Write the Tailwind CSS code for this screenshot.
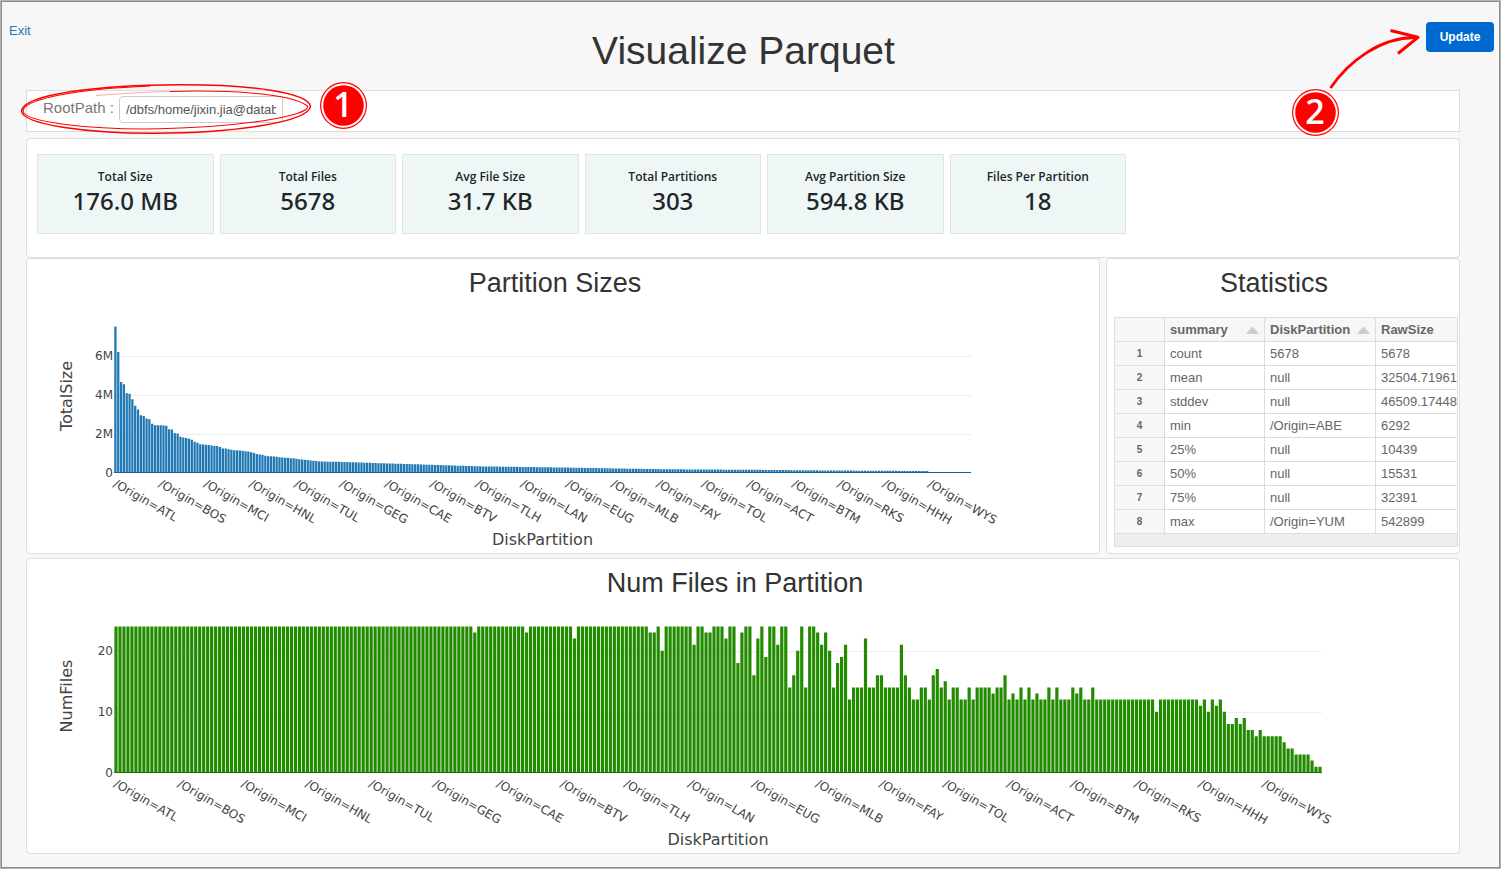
<!DOCTYPE html>
<html lang="en">

<head>
    <meta charset="UTF-8">
    <meta name="viewport" content="width=device-width, initial-scale=1.0">
    <title>Visualize Parquet</title>
    <script src="https://cdn.jsdelivr.net/npm/@tailwindcss/browser@4"></script>
</head>

<body class="min-h-screen border border-[#b4b4b4] bg-[#f7f7f7] font-['Liberation_Sans',Arial,sans-serif] text-[#333] inset-ring inset-ring-[#8c8c8c]">
    <header class="flex items-start pt-[21px] pb-[10px] pl-2 pr-[6px]">
        <nav class="w-[52px] text-[13px] leading-[18px]">
            <a href="#" class="text-[#1c75bf] hover:underline">Exit</a>
        </nav>
        <h1 class="flex-1 text-center text-[39px] leading-[58px]">Visualize Parquet</h1>
        <div class="relative">
            <button type="button" class="block h-[30px] w-[68px] rounded bg-[#0069d1] text-[12px] font-bold text-white hover:bg-blue-700">Update</button>
            <!-- step 2 callout -->
            <svg class="pointer-events-none absolute top-0 right-[68px] z-10" width="140" height="116" viewBox="0 0 140 116" fill="none" aria-hidden="true">
                <path d="M44.500 66 C62 40 94 15 130 15.500" stroke="#f00" stroke-width="2.800" />
                <path d="M104.500 8.500 L132 15.300 L112 31.500" stroke="#f00" stroke-width="3" stroke-linejoin="round" />
                <circle cx="29.500" cy="90.500" r="23.500" fill="#f00" />
                <circle cx="29.500" cy="90.500" r="22.300" fill="#fff" />
                <circle cx="29.500" cy="90.500" r="20.300" fill="#f00" />
                <text x="29" y="102" text-anchor="middle" class="fill-white font-['Open_Sans',sans-serif] text-[34px] font-semibold">2</text>
            </svg>
        </div>
    </header>

    <main class="pr-10 pb-3 pl-[25px]">
        <form class="relative mb-[6px] flex h-[42px] items-start border border-[#ddd] bg-white pt-[5px] pl-4">
            <label for="rootpath" class="mr-[5px] text-[15px] leading-6 text-[#777]">RootPath :</label>
            <input id="rootpath" type="text" value="/dbfs/home/jixin.jia@datab" class="h-[27px] w-[164px] rounded border border-[#ccc] bg-white px-[6px] text-[13px] text-[#555]">
            <!-- step 1 callout -->
            <svg class="pointer-events-none absolute -top-[11px] -left-[7px] z-10" width="352" height="56" viewBox="0 0 352 56" fill="none" aria-hidden="true">
                <path d="M1.500 31 C4 14 80 5 160 4.800 C235 4.600 287 13 290.500 26 C289 42 215 53 135 53.200 C70 53.500 3 45 1.500 31" stroke="#f00" stroke-width="1.500" />
                <path d="M130 6 C60 9 5 18 3 31 C4 42 70 50 140 48.800 C220 47 291 36 287.500 26 C270 12 200 10 150 11.500" stroke="#f00" stroke-width="1.100" />
                <path d="M150 11.500 C120 12 100 14 76 15.500" stroke="#f00" stroke-opacity=".35" />
                <circle cx="323.500" cy="25.500" r="23.500" fill="#f00" />
                <circle cx="323.500" cy="25.500" r="22.300" fill="#fff" />
                <circle cx="323.500" cy="25.500" r="20.300" fill="#f00" />
                <text x="323" y="37" text-anchor="middle" class="fill-white font-['Open_Sans',sans-serif] text-[34px] font-semibold">1</text>
            </svg>
        </form>

        <section class="rounded-sm border border-[#ddd] bg-white px-[10px] pt-[15px] pb-[23px]">
            <dl class="grid max-w-[1089px] grid-cols-6 gap-[6px] text-center font-['Noto_Sans','Open_Sans',sans-serif] text-[#212529]">
                <div class="h-20 border border-[#dfe6e8] bg-[#eef7f6] pt-[13px]">
                    <dt class="font-['Open_Sans',sans-serif] text-[12px] leading-[18px] font-semibold">Total Size</dt>
                    <dd class="text-[24px] leading-[30px] font-medium">176.0 MB</dd>
                </div>
                <div class="h-20 border border-[#dfe6e8] bg-[#eef7f6] pt-[13px]">
                    <dt class="font-['Open_Sans',sans-serif] text-[12px] leading-[18px] font-semibold">Total Files</dt>
                    <dd class="text-[24px] leading-[30px] font-medium">5678</dd>
                </div>
                <div class="h-20 border border-[#dfe6e8] bg-[#eef7f6] pt-[13px]">
                    <dt class="font-['Open_Sans',sans-serif] text-[12px] leading-[18px] font-semibold">Avg File Size</dt>
                    <dd class="text-[24px] leading-[30px] font-medium">31.7 KB</dd>
                </div>
                <div class="h-20 border border-[#dfe6e8] bg-[#eef7f6] pt-[13px]">
                    <dt class="font-['Open_Sans',sans-serif] text-[12px] leading-[18px] font-semibold">Total Partitions</dt>
                    <dd class="text-[24px] leading-[30px] font-medium">303</dd>
                </div>
                <div class="h-20 border border-[#dfe6e8] bg-[#eef7f6] pt-[13px]">
                    <dt class="font-['Open_Sans',sans-serif] text-[12px] leading-[18px] font-semibold">Avg Partition Size</dt>
                    <dd class="text-[24px] leading-[30px] font-medium">594.8 KB</dd>
                </div>
                <div class="h-20 border border-[#dfe6e8] bg-[#eef7f6] pt-[13px]">
                    <dt class="font-['Open_Sans',sans-serif] text-[12px] leading-[18px] font-semibold">Files Per Partition</dt>
                    <dd class="text-[24px] leading-[30px] font-medium">18</dd>
                </div>
            </dl>
        </section>

        <div class="mb-1 flex gap-[6px]">
            <section class="min-w-0 flex-1 rounded-sm border border-[#ddd] bg-white pt-2">
                <h2 class="pt-px pr-4 text-center text-[27px] leading-[31px]">Partition Sizes</h2>
                <svg id="sizes" class="block w-full font-['DejaVu_Sans',Verdana,sans-serif]" viewBox="0 0 1072 254" fill="#444"></svg>
            </section>

            <section class="w-[354px] rounded-sm border border-[#ddd] bg-white pt-2 pr-px pb-[6px] pl-[7px]">
                <h2 class="pt-px pr-6 text-center text-[27px] leading-[31px]">Statistics</h2>
                <div class="mt-[18px] overflow-hidden">
                    <table class="w-full table-fixed border-collapse text-left text-[13px] text-[#666]">
                        <colgroup>
                            <col class="w-[50px]">
                            <col class="w-[100px]">
                            <col class="w-[111px]">
                            <col>
                        </colgroup>
                        <thead>
                            <tr class="h-6 bg-[#f7f7f7]">
                                <th class="border border-[#ddd]"></th>
                                <th class="border border-[#ddd] px-[5px]">
                                    <div class="flex items-center justify-between">summary <svg width="13" height="8" viewBox="0 0 13 8" fill="#ccc"><path d="M6.500 0.500 L12.500 7 L12 8 H1 L0.500 7 Z" /></svg></div>
                                </th>
                                <th class="border border-[#ddd] px-[5px]">
                                    <div class="flex items-center justify-between">DiskPartition <svg width="13" height="8" viewBox="0 0 13 8" fill="#ccc"><path d="M6.500 0.500 L12.500 7 L12 8 H1 L0.500 7 Z" /></svg></div>
                                </th>
                                <th class="border border-[#ddd] px-[5px]">RawSize</th>
                            </tr>
                        </thead>
                        <tbody>
                            <tr class="h-6">
                                <th class="border border-[#ddd] bg-[#f7f7f7] text-center text-[10px]">1</th>
                                <td class="border border-[#ddd] px-[5px]">count</td>
                                <td class="border border-[#ddd] px-[5px]">5678</td>
                                <td class="border border-[#ddd] pl-[5px]">5678</td>
                            </tr>
                            <tr class="h-6">
                                <th class="border border-[#ddd] bg-[#f7f7f7] text-center text-[10px]">2</th>
                                <td class="border border-[#ddd] px-[5px]">mean</td>
                                <td class="border border-[#ddd] px-[5px]">null</td>
                                <td class="border border-[#ddd] pl-[5px]">32504.71961</td>
                            </tr>
                            <tr class="h-6">
                                <th class="border border-[#ddd] bg-[#f7f7f7] text-center text-[10px]">3</th>
                                <td class="border border-[#ddd] px-[5px]">stddev</td>
                                <td class="border border-[#ddd] px-[5px]">null</td>
                                <td class="border border-[#ddd] pl-[5px]">46509.17448</td>
                            </tr>
                            <tr class="h-6">
                                <th class="border border-[#ddd] bg-[#f7f7f7] text-center text-[10px]">4</th>
                                <td class="border border-[#ddd] px-[5px]">min</td>
                                <td class="border border-[#ddd] px-[5px]">/Origin=ABE</td>
                                <td class="border border-[#ddd] pl-[5px]">6292</td>
                            </tr>
                            <tr class="h-6">
                                <th class="border border-[#ddd] bg-[#f7f7f7] text-center text-[10px]">5</th>
                                <td class="border border-[#ddd] px-[5px]">25%</td>
                                <td class="border border-[#ddd] px-[5px]">null</td>
                                <td class="border border-[#ddd] pl-[5px]">10439</td>
                            </tr>
                            <tr class="h-6">
                                <th class="border border-[#ddd] bg-[#f7f7f7] text-center text-[10px]">6</th>
                                <td class="border border-[#ddd] px-[5px]">50%</td>
                                <td class="border border-[#ddd] px-[5px]">null</td>
                                <td class="border border-[#ddd] pl-[5px]">15531</td>
                            </tr>
                            <tr class="h-6">
                                <th class="border border-[#ddd] bg-[#f7f7f7] text-center text-[10px]">7</th>
                                <td class="border border-[#ddd] px-[5px]">75%</td>
                                <td class="border border-[#ddd] px-[5px]">null</td>
                                <td class="border border-[#ddd] pl-[5px]">32391</td>
                            </tr>
                            <tr class="h-6">
                                <th class="border border-[#ddd] bg-[#f7f7f7] text-center text-[10px]">8</th>
                                <td class="border border-[#ddd] px-[5px]">max</td>
                                <td class="border border-[#ddd] px-[5px]">/Origin=YUM</td>
                                <td class="border border-[#ddd] pl-[5px]">542899</td>
                            </tr>
                        </tbody>
                    </table>
                    <div class="h-[13px] border border-t-0 border-[#ddd] bg-[#eee]"></div>
                </div>
            </section>
        </div>

        <section class="rounded-sm border border-[#ddd] bg-white pt-2">
            <h2 class="pt-px pr-4 text-center text-[27px] leading-[31px]">Num Files in Partition</h2>
            <svg id="files" class="block w-full font-['DejaVu_Sans',Verdana,sans-serif]" viewBox="0 0 1432 254" fill="#444"></svg>
        </section>
    </main>

    <script>
        const origins = ['ATL', 'BOS', 'MCI', 'HNL', 'TUL', 'GEG', 'CAE', 'BTV', 'TLH', 'LAN', 'EUG', 'MLB', 'FAY', 'TOL', 'ACT', 'BTM', 'RKS', 'HHH', 'WYS'];

        // largest partitions, in MB
        const sizes = [
            7.50, 6.20, 4.65, 4.54, 4.08, 4.06, 3.77, 3.44, 3.25, 2.95, 2.91, 2.78, 2.74, 2.52, 2.44, 2.44, 2.44, 2.43, 2.41, 2.23,
            2.22, 2.03, 2.02, 1.85, 1.81, 1.78, 1.74, 1.69, 1.59, 1.54, 1.46, 1.45, 1.44, 1.42, 1.40, 1.38, 1.37, 1.32, 1.25, 1.25,
            1.21, 1.18, 1.16, 1.16, 1.15, 1.13, 1.11, 1.09, 1.06, 1.01, 0.97, 0.94, 0.92, 0.87, 0.85, 0.85, 0.84, 0.82, 0.80, 0.79,
            0.77, 0.77, 0.75, 0.74, 0.72, 0.70, 0.68, 0.67, 0.65, 0.63, 0.62, 0.60, 0.58
        ];
        // long tail: [index, MB]
        const tail = [[72, 0.58], [80, 0.56], [94, 0.49], [112, 0.41], [129, 0.33], [159, 0.27], [182, 0.21], [197, 0.18], [228, 0.15], [252, 0.12], [287, 0.09], [288, 0.03], [302, 0.01]];
        for (let k = 1; k < tail.length; k++) {
            const [i0, v0] = tail[k - 1];
            const [i1, v1] = tail[k];
            for (let i = i0 + 1; i <= i1; i++) sizes[i] = v0 + (v1 - v0) * (i - i0) / (i1 - i0);
        }

        // [files, number of consecutive partitions]
        const runs = [
            [24, 90], [23, 1], [24, 12], [23, 1], [24, 11], [22, 1], [24, 18], [23, 2], [24, 1], [20, 1], [24, 7], [21, 1], [24, 2], [23, 2],
            [24, 3], [22, 1], [24, 2], [18, 1], [23, 1], [24, 2], [16, 1], [22, 1], [24, 1], [19, 1], [24, 2], [21, 1], [24, 2], [14, 1],
            [16, 1], [20, 1], [24, 1], [14, 1], [24, 2], [23, 1], [21, 1], [23, 1], [20, 1], [14, 1], [18, 1], [19, 1], [21, 1], [12, 1],
            [14, 3], [22, 1], [14, 2], [16, 2], [14, 4], [21, 1], [16, 1], [14, 1], [12, 2], [14, 2], [12, 1], [16, 1], [17, 1], [14, 1],
            [15, 1], [12, 1], [14, 2], [12, 2], [14, 1], [12, 1], [14, 4], [13, 1], [14, 2], [16, 1], [12, 1], [13, 1], [12, 1], [14, 1],
            [12, 1], [14, 1], [12, 1], [13, 1], [12, 2], [14, 1], [12, 1], [14, 1], [12, 3], [14, 1], [13, 1], [14, 1], [12, 2], [14, 1],
            [12, 15], [10, 1], [12, 10], [11, 1], [12, 1], [10, 1], [12, 1], [11, 1], [12, 1], [10, 1], [8, 2], [9, 1], [8, 1], [9, 1],
            [7, 2], [6, 1], [7, 1], [6, 5], [5, 1], [4, 2], [3, 4], [2, 1], [1, 2]
        ];
        const files = runs.flatMap(([v, n]) => Array(n).fill(v));

        function draw(id, data, o) {
            const left = 87, base = 174;
            const step = o.width / data.length;
            const right = left + o.width;
            let out = '';
            for (const [v, label] of o.ticks) {
                const y = Math.round(base - v * o.scale) - 0.5;
                if (v) out += `<path d="M${left} ${y + 1}H${right}" stroke="#eee"/>`;
                out += `<text x="86" y="${y + 4.5}" font-size="12" text-anchor="end">${label}</text>`;
            }
            let d = '';
            data.forEach((v, i) => {
                const x = left + (i + 0.1) * step;
                d += `M${x.toFixed(2)} ${base}v${(-v * o.scale - 0.2).toFixed(2)}h${(step * 0.8).toFixed(2)}V${base}z`;
            });
            out += `<path d="${d}" fill="${o.color}"/><path d="M${left} ${base - 0.5}H${right}" stroke="${o.line}"/>`;
            origins.forEach((name, i) => {
                const x = left + (i * 16 + 0.5) * step - 3;
                out += `<text transform="translate(${x.toFixed(1)} 187) rotate(30)" font-size="12">/Origin=${name}</text>`;
            });
            out += `<text x="${left + o.width / 2}" y="246" font-size="16" text-anchor="middle">DiskPartition</text>`;
            out += `<text transform="translate(45 97) rotate(-90)" font-size="16" text-anchor="middle">${o.title}</text>`;
            document.getElementById(id).innerHTML = out;
        }

        draw('sizes', sizes, { width: 857, scale: 19.5, color: '#1f77b4', line: '#1b5f92', title: 'TotalSize', ticks: [[0, '0'], [2, '2M'], [4, '4M'], [6, '6M']] });
        draw('files', files, { width: 1208, scale: 6.1, color: '#228b00', line: '#1d6e08', title: 'NumFiles', ticks: [[0, '0'], [10, '10'], [20, '20']] });
    </script>
</body>

</html>
